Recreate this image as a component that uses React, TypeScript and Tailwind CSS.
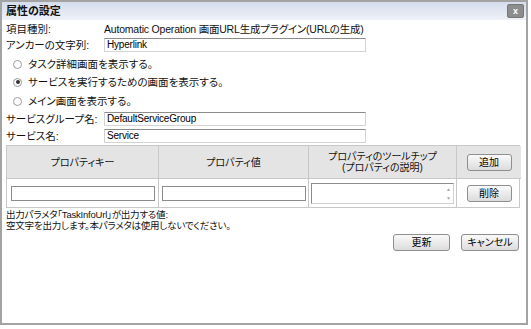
import React from "react";

function Input({ value, w }: { value?: string; w: string }) {
  return (
    <div
      className={`h-[14px] ${w} shrink-0 border border-[#d4d4d4] border-t-[#8c8c8c] bg-white px-[2px] font-['Liberation_Sans',sans-serif] text-[10px] leading-[12px] tracking-[-0.2px] text-black`}
    >
      {value}
    </div>
  );
}

function Radio({ checked }: { checked?: boolean }) {
  return (
    <span className="flex h-[9px] w-[9px] shrink-0 items-center justify-center rounded-full border border-[#9a9a9a] bg-white">
      {checked && <span className="h-[4px] w-[4px] rounded-full bg-[#333]" />}
    </span>
  );
}

function Btn({ label, w }: { label: string; w: string }) {
  return (
    <div
      className={`flex h-[17px] ${w} items-center justify-center rounded-[3px] border border-[#8e8e8e] bg-gradient-to-b from-[#fafafa] to-[#dcdcdc] text-[10px] text-black`}
    >
      {label}
    </div>
  );
}

export default function App() {
  return (
    <div className="h-[329px] w-[531px] bg-white font-['Liberation_Sans','Noto_Sans_CJK_JP',sans-serif] [font-feature-settings:'palt']">
      <div className="flex h-[325px] w-[528px] flex-col border-2 border-[#a3a3a3] bg-white">
        <div className="flex h-[18px] shrink-0 items-center justify-between bg-gradient-to-b from-[#d5ddec] to-[#eef1f8] pl-[4px] pr-[2px]">
          <span className="text-[11px] font-bold text-[#111]">属性の設定</span>
          <span className="flex h-[14px] w-[17px] items-center justify-center rounded-[2px] border border-[#777] bg-[#8d8d8d] text-[9px] font-bold leading-none text-white">
            x
          </span>
        </div>
        <div className="flex flex-col px-[4px] text-[10.5px] leading-[13px] text-[#111]">
          <div className="mt-[2px] flex h-[14px] items-center">
            <span className="w-[98px] shrink-0">項目種別:</span>
            <span className="whitespace-nowrap tracking-[-0.2px]">Automatic Operation 画面URL生成プラグイン(URLの生成)</span>
          </div>
          <div className="mt-[2px] flex h-[14px] items-center">
            <span className="w-[98px] shrink-0">アンカーの文字列:</span>
            <Input value="Hyperlink" w="w-[262px]" />
          </div>
          <div className="mt-[5px] flex h-[14px] items-center gap-[6px] pl-[7px]">
            <Radio />
            <span>タスク詳細画面を表示する。</span>
          </div>
          <div className="mt-[4px] flex h-[14px] items-center gap-[6px] pl-[7px]">
            <Radio checked />
            <span>サービスを実行するための画面を表示する。</span>
          </div>
          <div className="mt-[5px] flex h-[14px] items-center gap-[6px] pl-[7px]">
            <Radio />
            <span>メイン画面を表示する。</span>
          </div>
          <div className="mt-[4px] flex h-[14px] items-center">
            <span className="w-[98px] shrink-0 whitespace-nowrap">サービスグループ名:</span>
            <Input value="DefaultServiceGroup" w="w-[262px]" />
          </div>
          <div className="mt-[3px] flex h-[14px] items-center">
            <span className="w-[98px] shrink-0">サービス名:</span>
            <Input value="Service" w="w-[262px]" />
          </div>
          <div className="mt-[2px] grid w-[514px] grid-cols-[152px_150px_148px_64px] border border-[#c8c8c8] text-[10px]">
            <div className="flex h-[33px] items-center justify-center border-r border-b border-[#c8c8c8] bg-[#e4e4e4]">
              プロパティキー
            </div>
            <div className="flex h-[33px] items-center justify-center border-r border-b border-[#c8c8c8] bg-[#e4e4e4]">
              プロパティ値
            </div>
            <div className="flex h-[33px] flex-col items-center justify-center border-r border-b border-[#c8c8c8] bg-[#e4e4e4] leading-[11px]">
              <span>プロパティのツールチップ</span>
              <span>(プロパティの説明)</span>
            </div>
            <div className="flex h-[33px] items-center justify-center border-b border-[#c8c8c8] bg-[#e4e4e4]">
              <Btn label="追加" w="w-[45px]" />
            </div>
            <div className="flex h-[28px] items-center justify-center border-r border-[#c8c8c8]">
              <div className="h-[15px] w-[144px] border border-[#8c8c8c] bg-white" />
            </div>
            <div className="flex h-[28px] items-center justify-center border-r border-[#c8c8c8]">
              <div className="h-[15px] w-[144px] border border-[#8c8c8c] bg-white" />
            </div>
            <div className="flex h-[28px] items-center justify-center border-r border-[#c8c8c8]">
              <div className="flex h-[21px] w-[143px] justify-end border border-[#d0d0d0] border-t-[#8c8c8c] border-l-[#8c8c8c] bg-white">
                <div className="flex w-[9px] flex-col items-center justify-between py-[2px] text-[5px] leading-[6px] text-[#aaa]">
                  <span>▲</span>
                  <span>▼</span>
                </div>
              </div>
            </div>
            <div className="flex h-[28px] items-center justify-center">
              <Btn label="削除" w="w-[45px]" />
            </div>
          </div>
          <div className="mt-[1px] text-[9.5px] leading-[11px] tracking-[-0.2px]">
            <div>出力パラメタ「TaskInfoUrl」が出力する値:</div>
            <div>空文字を出力します。本パラメタは使用しないでください。</div>
          </div>
          <div className="mt-[3px] flex justify-end gap-[11px] pr-[3px]">
            <Btn label="更新" w="w-[57px]" />
            <Btn label="キャンセル" w="w-[58px]" />
          </div>
        </div>
      </div>
    </div>
  );
}
